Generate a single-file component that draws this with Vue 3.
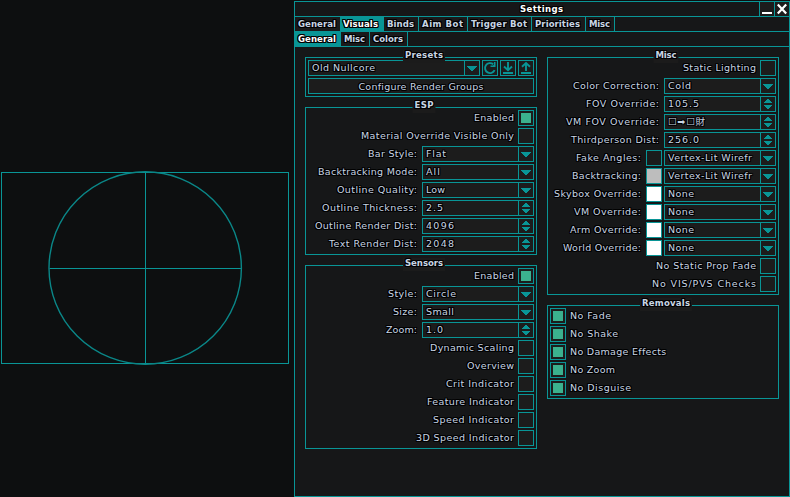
<script setup>
const tabs = [
  { t: 'General', w: 38, c: 45 },
  { t: 'Visuals', w: 35, c: 44, on: true },
  { t: 'Binds', w: 27, c: 35 },
  { t: 'Aim Bot', w: 41, c: 49 },
  { t: 'Trigger Bot', w: 56, c: 64 },
  { t: 'Priorities', w: 45, c: 54 },
  { t: 'Misc', w: 21, c: 29 },
]
const subTabs = [
  { t: 'General', w: 38, c: 46, on: true },
  { t: 'Misc', w: 21, c: 29 },
  { t: 'Colors', w: 30, c: 38 },
]

const select = (t, w, v, vw, swatch) => ({ kind: 'select', t, w, v, vw, swatch })
const number = (t, w, v, vw) => ({ kind: 'number', t, w, v, vw })
const check = (t, w, on = false) => ({ kind: 'check', t, w, on })

const columns = [
  [
    { title: 'Presets', w: 38, rows: [{ kind: 'preset' }, { kind: 'button', t: 'Configure Render Groups', w: 125 }] },
    {
      title: 'ESP', w: 19, rows: [
        check('Enabled', 40, true),
        check('Material Override Visible Only', 153),
        select('Bar Style:', 49, 'Flat', 20),
        select('Backtracking Mode:', 99, 'All', 14),
        select('Outline Quality:', 80, 'Low', 19),
        number('Outline Thickness:', 95, '2.5', 17),
        number('Outline Render Dist:', 102, '4096', 28),
        number('Text Render Dist:', 88, '2048', 28),
      ],
    },
    {
      title: 'Sensors', w: 38, rows: [
        check('Enabled', 40, true),
        select('Style:', 29, 'Circle', 30),
        select('Size:', 24, 'Small', 28),
        number('Zoom:', 31, '1.0', 17),
        check('Dynamic Scaling', 84),
        check('Overview', 47),
        check('Crit Indicator', 68),
        check('Feature Indicator', 87),
        check('Speed Indicator', 81),
        check('3D Speed Indicator', 98),
      ],
    },
  ],
  [
    {
      title: 'Misc', w: 21, rows: [
        check('Static Lighting', 73),
        select('Color Correction:', 86, 'Cold', 23),
        number('FOV Override:', 73, '105.5', 31),
        number('VM FOV Override:', 93, '☐➡☐財', 37),
        number('Thirdperson Dist:', 88, '256.0', 31),
        select('Fake Angles:', 65, 'Vertex-Lit Wirefr', 84, 'dark'),
        select('Backtracking:', 69, 'Vertex-Lit Wirefr', 84, 'gray'),
        select('Skybox Override:', 87, 'None', 26, 'white'),
        select('VM Override:', 67, 'None', 26, 'white'),
        select('Arm Override:', 71, 'None', 26, 'white'),
        select('World Override:', 78, 'None', 26, 'white'),
        check('No Static Prop Fade', 100),
        check('No VIS/PVS Checks', 104),
      ],
    },
    {
      title: 'Removals', w: 48, left: true, rows: [
        check('No Fade', 41, true),
        check('No Shake', 48, true),
        check('No Damage Effects', 96, true),
        check('No Zoom', 45, true),
        check('No Disguise', 61, true),
      ],
    },
  ],
]

// Tracks the text so that it spans the given width.
const vFit = {
  mounted(el, { value }) {
    const gaps = [...el.textContent].length - 1
    const spacing = (value - el.getBoundingClientRect().width) / gaps
    el.style.letterSpacing = `${spacing}px`
    el.style.marginRight = `${-spacing}px`
  },
}
</script>

<template>
  <main class="screen">
    <div class="radar">
      <svg width="290" height="196" viewBox="0 0 290 196">
        <rect x="1.5" y="2.5" width="287" height="191" />
        <path d="M145.5 2.5V193.5M49.5 98.5H241.5" />
        <circle cx="145.2" cy="98" r="96.2" />
      </svg>
    </div>
    <section class="window">
      <header class="titlebar">
        <div class="title"><span v-fit="43">Settings</span></div>
        <button class="win"><svg width="14" height="14" shape-rendering="crispEdges"><path d="M2 10H12V12H2Z" /></svg></button>
        <button class="win"><svg width="14" height="14"><path class="x" d="M2.8 2.5L11.2 11.5M11.2 2.5L2.8 11.5" /></svg></button>
      </header>
      <nav class="tabs">
        <div v-for="tab in tabs" :key="tab.t" class="tab" :class="{ on: tab.on }" :style="{ width: tab.c + 'px' }"><span v-fit="tab.w">{{ tab.t }}</span></div>
      </nav>
      <nav class="tabs">
        <div v-for="tab in subTabs" :key="tab.t" class="tab" :class="{ on: tab.on }" :style="{ width: tab.c + 'px' }"><span v-fit="tab.w">{{ tab.t }}</span></div>
      </nav>
      <div class="columns">
        <div v-for="(panels, i) in columns" :key="i" class="column">
          <section v-for="p in panels" :key="p.title" class="panel" :class="{ left: p.left }">
            <h2><span v-fit="p.w">{{ p.title }}</span></h2>
            <div v-for="(r, j) in p.rows" :key="j" class="row">
              <template v-if="r.kind === 'preset'">
                <div class="field wide">
                  <div class="value"><span v-fit="63">Old Nullcore</span></div>
                  <div class="knob"><svg width="14" height="14" shape-rendering="crispEdges"><path d="M2 5h10v1h-1v1h-1v1h-1v1h-1v1H6V9H5V8H4V7H3V6H2z" /></svg></div>
                </div>
                <button class="tool"><svg width="14" height="14"><path class="line" d="M10.2 3.2A5 5 0 1 0 11.6 9.2" /><path d="M12.5 1V6H7.5V4.5H10L11 3.5V1z" /></svg></button>
                <button class="tool"><svg width="14" height="14"><path class="line" d="M7 1V9M3 5.5L7 9.3L11 5.5M2 12H12" /></svg></button>
                <button class="tool"><svg width="14" height="14"><path class="line" d="M7 10V2M3 5.8L7 2L11 5.8M2 12H12" /></svg></button>
              </template>
              <button v-else-if="r.kind === 'button'" class="action"><span v-fit="r.w">{{ r.t }}</span></button>
              <template v-else-if="r.kind === 'check'">
                <label class="caption"><span v-fit="r.w">{{ r.t }}</span></label>
                <div class="box"><i v-if="r.on"></i></div>
              </template>
              <template v-else>
                <label class="caption colon"><span v-fit="r.w">{{ r.t }}</span></label>
                <div v-if="r.swatch" class="box swatch" :class="r.swatch"></div>
                <div class="field">
                  <div class="value"><span v-fit="r.vw">{{ r.v }}</span></div>
                  <div class="knob">
                    <svg width="14" height="14" shape-rendering="crispEdges">
                      <path v-if="r.kind === 'select'" d="M2 5h10v1h-1v1h-1v1h-1v1h-1v1H6V9H5V8H4V7H3V6H2z" />
                      <path v-else d="M3 6V5h1V4h1V3h1V2h2v1h1v1h1v1h1v1zM3 8h8v1h-1v1H9v1H8v1H6v-1H5v-1H4V9H3z" />
                    </svg>
                  </div>
                </div>
              </template>
            </div>
          </section>
        </div>
      </div>
    </section>
  </main>
</template>

<style>
body { background: #0d0f10; }
</style>

<style scoped>
* { box-sizing: border-box; }
.screen {
  --line: #099596;
  --field: #1c1c1c;
  display: flex;
  width: 790px;
  height: 497px;
  padding-top: 1px;
  overflow: hidden;
  background: #0d0f10;
  color: #c8d5e4;
  font: 9.5px/14px "DejaVu Sans", Verdana, "Noto Sans CJK JP", sans-serif;
  text-shadow: -1px -1px #000, 0 -1px #000, 1px -1px #000, -1px 0 #000, 1px 0 #000, -1px 1px #000, 0 1px #000, 1px 1px #000;
  white-space: nowrap;
}
span { display: inline-block; }
svg { display: block; fill: var(--line); }
button { padding: 0; color: inherit; font: inherit; text-shadow: inherit; }
.radar { width: 294px; padding-top: 169px; }
.radar svg { fill: none; stroke: var(--line); }
.radar circle { stroke-width: 1.4; stroke: #0a8788; }
.window { width: 496px; height: 496px; border: 1px solid var(--line); background: #161718; }
.titlebar, .tabs { display: flex; height: 15px; border-bottom: 1px solid var(--line); }
.titlebar, .tabs, h2 { font-size: 9.5px; font-family: "DejaVu Sans Condensed", "DejaVu Sans", sans-serif; font-weight: bold; }
.title { flex: 1; padding-left: 29px; text-align: center; color: #fff; }
.win { width: 15px; border: 0; border-left: 1px solid var(--line); background: var(--field); }
.win svg { fill: #fff; }
.x { stroke: #fff; stroke-width: 2.2; }
.tab { height: 14px; padding-left: 3px; border-right: 1px solid var(--line); background: #1a1a1b; }
.tab.on { border-right: 0; background: var(--line); color: #fff; }
.tab:first-child:not(.on) { border-right: 0; }
.columns { display: flex; gap: 10px; padding: 10px; }
.column { display: flex; flex-direction: column; gap: 10px; width: 232px; }
.panel { position: relative; display: flex; flex-direction: column; gap: 2px; padding: 2px; border: 1px solid var(--line); }
h2 { position: absolute; top: -8px; left: 50%; height: 13px; margin: 0 0 0 3px; padding: 0 2px; transform: translateX(-50%); background: #1b1b1b; line-height: 9px; }
.row { display: flex; gap: 2px; height: 16px; justify-content: flex-end; }
.left .row { flex-direction: row-reverse; }
.caption { padding-right: 2px; line-height: 15px; }
.caption.colon { padding-right: 3px; }
.left .caption { padding-left: 2px; }
.box, .tool { width: 16px; height: 16px; border: 1px solid var(--line); background: var(--field); }
.box { padding: 2px; }
.box i { display: block; width: 10px; height: 10px; background: #3bb18e; }
.swatch.dark { background: #1a1c1c; }
.swatch.gray { background: #bdbdbd; }
.swatch.white { background: #fff; }
.field { display: flex; width: 112px; border: 1px solid var(--line); background: var(--field); }
.field.wide { width: 172px; }
.value { flex: 1; height: 14px; padding-left: 3px; line-height: 14px; }
.knob { width: 15px; border-left: 1px solid var(--line); }
.line { fill: none; stroke: var(--line); stroke-width: 1.9; }
.action { flex: 1; border: 1px solid var(--line); background: var(--field); line-height: 13px; }
</style>
